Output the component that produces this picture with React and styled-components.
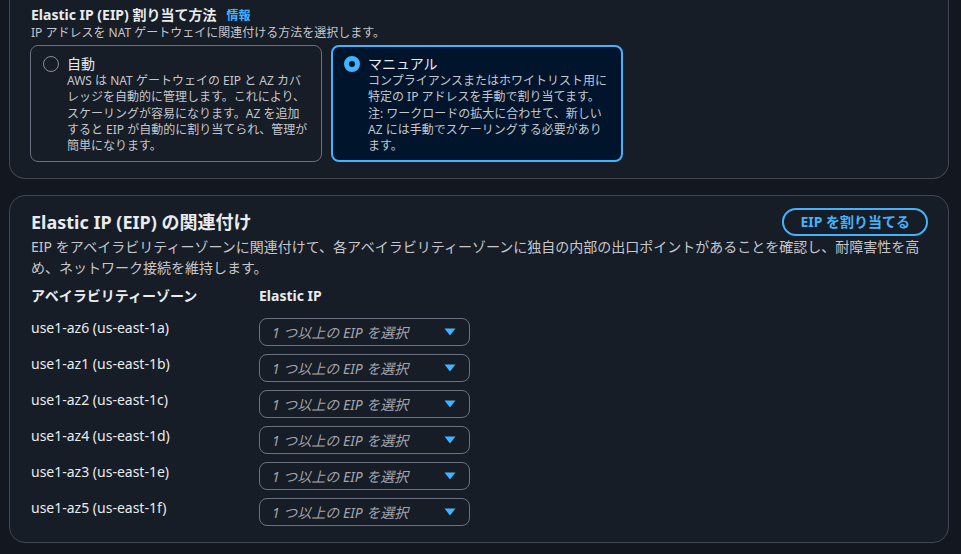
import styled, { createGlobalStyle } from 'styled-components';

const GlobalStyle = createGlobalStyle`
  body {
    margin: 0;
    background: #13171f;
    font-family: "Noto Sans", "Noto Sans CJK JP", sans-serif;
    color: #e9ebed;
  }
`;

const zones = [
  'use1-az6 (us-east-1a)',
  'use1-az1 (us-east-1b)',
  'use1-az2 (us-east-1c)',
  'use1-az4 (us-east-1d)',
  'use1-az3 (us-east-1e)',
  'use1-az5 (us-east-1f)',
];

function App() {
  return (
    <Page>
      <GlobalStyle />
      <TopPanel>
        <HeaderRow>
          <SmallTitle>Elastic IP (EIP) 割り当て方法</SmallTitle>
          <InfoLink>情報</InfoLink>
        </HeaderRow>
        <SmallDesc>IP アドレスを NAT ゲートウェイに関連付ける方法を選択します。</SmallDesc>
        <Tiles>
          <Tile>
            <Radio />
            <TileBody>
              <TileTitle>自動</TileTitle>
              <TileText>
                AWS は NAT ゲートウェイの EIP と AZ カバ<br />
                レッジを自動的に管理します。これにより、<br />
                スケーリングが容易になります。AZ を追加<br />
                すると EIP が自動的に割り当てられ、管理が<br />
                簡単になります。
              </TileText>
            </TileBody>
          </Tile>
          <Tile $selected>
            <Radio $selected />
            <TileBody>
              <TileTitle>マニュアル</TileTitle>
              <TileText>
                コンプライアンスまたはホワイトリスト用に<br />
                特定の IP アドレスを手動で割り当てます。<br />
                注: ワークロードの拡大に合わせて、新しい<br />
                AZ には手動でスケーリングする必要があり<br />
                ます。
              </TileText>
            </TileBody>
          </Tile>
        </Tiles>
      </TopPanel>

      <Panel>
        <PanelHead>
          <PanelTitle>Elastic IP (EIP) の関連付け</PanelTitle>
          <PillButton>EIP を割り当てる</PillButton>
        </PanelHead>
        <PanelDesc>
          EIP をアベイラビリティーゾーンに関連付けて、各アベイラビリティーゾーンに独自の内部の出口ポイントがあることを確認し、耐障害性を高め、ネットワーク接続を維持します。
        </PanelDesc>
        <Grid>
          <ColHead>アベイラビリティーゾーン</ColHead>
          <ColHead>Elastic IP</ColHead>
          {zones.map((z) => (
            <Row key={z}>
              <ZoneLabel>{z}</ZoneLabel>
              <Select>
                <Placeholder>1 つ以上の EIP を選択</Placeholder>
                <Caret width="12" height="8" viewBox="0 0 12 8">
                  <path d="M0.5 0.5 H11.5 L6 7.5 Z" fill="#42b4ff" />
                </Caret>
              </Select>
            </Row>
          ))}
        </Grid>
      </Panel>
    </Page>
  );
}

const Page = styled.div`
  padding: 0 12px 0 9px;
  display: flex;
  flex-direction: column;
  gap: 16px;
`;

const Panel = styled.section`
  background: #161d26;
  border: 1px solid #424650;
  border-radius: 16px;
  padding: 12px 20px 16px 21px;
`;

const TopPanel = styled(Panel)`
  border-top: none;
  border-radius: 0 0 16px 16px;
  padding: 5px 20px 16px 21px;
`;

const HeaderRow = styled.div`
  display: flex;
  align-items: baseline;
  gap: 10px;
  height: 20px;
`;

const SmallTitle = styled.h3`
  margin: 0;
  font-size: 14px;
  font-weight: 700;
  line-height: 20px;
  color: #e9ebed;
`;

const InfoLink = styled.a`
  font-size: 12px;
  font-weight: 700;
  color: #42b4ff;
`;

const SmallDesc = styled.p`
  margin: 0 0 4px;
  font-size: 12px;
  line-height: 16px;
  color: #c6c6cd;
`;

const Tiles = styled.div`
  display: flex;
  gap: 9px;
  margin-left: -1px;
`;

const Tile = styled.div`
  width: 292px;
  height: 117px;
  box-sizing: border-box;
  display: flex;
  gap: 8px;
  padding: ${(p) => (p.$selected ? '8px 10px 0 11px' : '9px 11px 0 12px')};
  border: ${(p) => (p.$selected ? '2px solid #42b4ff' : '1px solid #6b7080')};
  border-radius: 8px;
  background: ${(p) => (p.$selected ? '#00142b' : 'transparent')};
`;

const Radio = styled.span`
  flex: none;
  width: 16px;
  height: 16px;
  margin-top: 1px;
  box-sizing: border-box;
  border-radius: 50%;
  border: ${(p) => (p.$selected ? '5px solid #42b4ff' : '1.5px solid #8c8c94')};
  background: ${(p) => (p.$selected ? '#00142b' : 'transparent')};
`;

const TileBody = styled.div`
  display: flex;
  flex-direction: column;
`;

const TileTitle = styled.div`
  font-size: 14px;
  line-height: 18px;
  color: #e9ebed;
`;

const TileText = styled.div`
  font-size: 12px;
  line-height: 16.3px;
  color: #c6c6cd;
  white-space: nowrap;
`;

const PanelHead = styled.div`
  display: flex;
  justify-content: space-between;
  align-items: center;
`;

const PanelTitle = styled.h2`
  margin: 0;
  font-size: 18px;
  font-weight: 700;
  line-height: 26px;
  color: #e9ebed;
`;

const PillButton = styled.button`
  height: 28px;
  padding: 0 16px;
  border: 2px solid #42b4ff;
  border-radius: 20px;
  background: transparent;
  color: #42b4ff;
  font-family: inherit;
  font-size: 14px;
  font-weight: 700;
  line-height: 20px;
`;

const PanelDesc = styled.p`
  margin: 0 0 8px;
  font-size: 14px;
  line-height: 21px;
  color: #c6c6cd;
`;

const Grid = styled.div`
  display: grid;
  grid-template-columns: 228px 211px;
  row-gap: 8px;
`;

const ColHead = styled.div`
  font-size: 14px;
  font-weight: 700;
  line-height: 20px;
  color: #e9ebed;
  margin-bottom: 4px;
`;

const Row = styled.div`
  display: contents;
`;

const ZoneLabel = styled.div`
  font-size: 14px;
  line-height: 20px;
  color: #e9ebed;
`;

const Select = styled.div`
  height: 28px;
  box-sizing: border-box;
  border: 1px solid #6b7080;
  border-radius: 8px;
  display: flex;
  align-items: center;
  justify-content: space-between;
  padding: 0 13px 0 12px;
`;

const Placeholder = styled.span`
  font-size: 14px;
  font-style: italic;
  color: #a4a4ad;
`;

const Caret = styled.svg`
  display: block;
`;

export default App;
